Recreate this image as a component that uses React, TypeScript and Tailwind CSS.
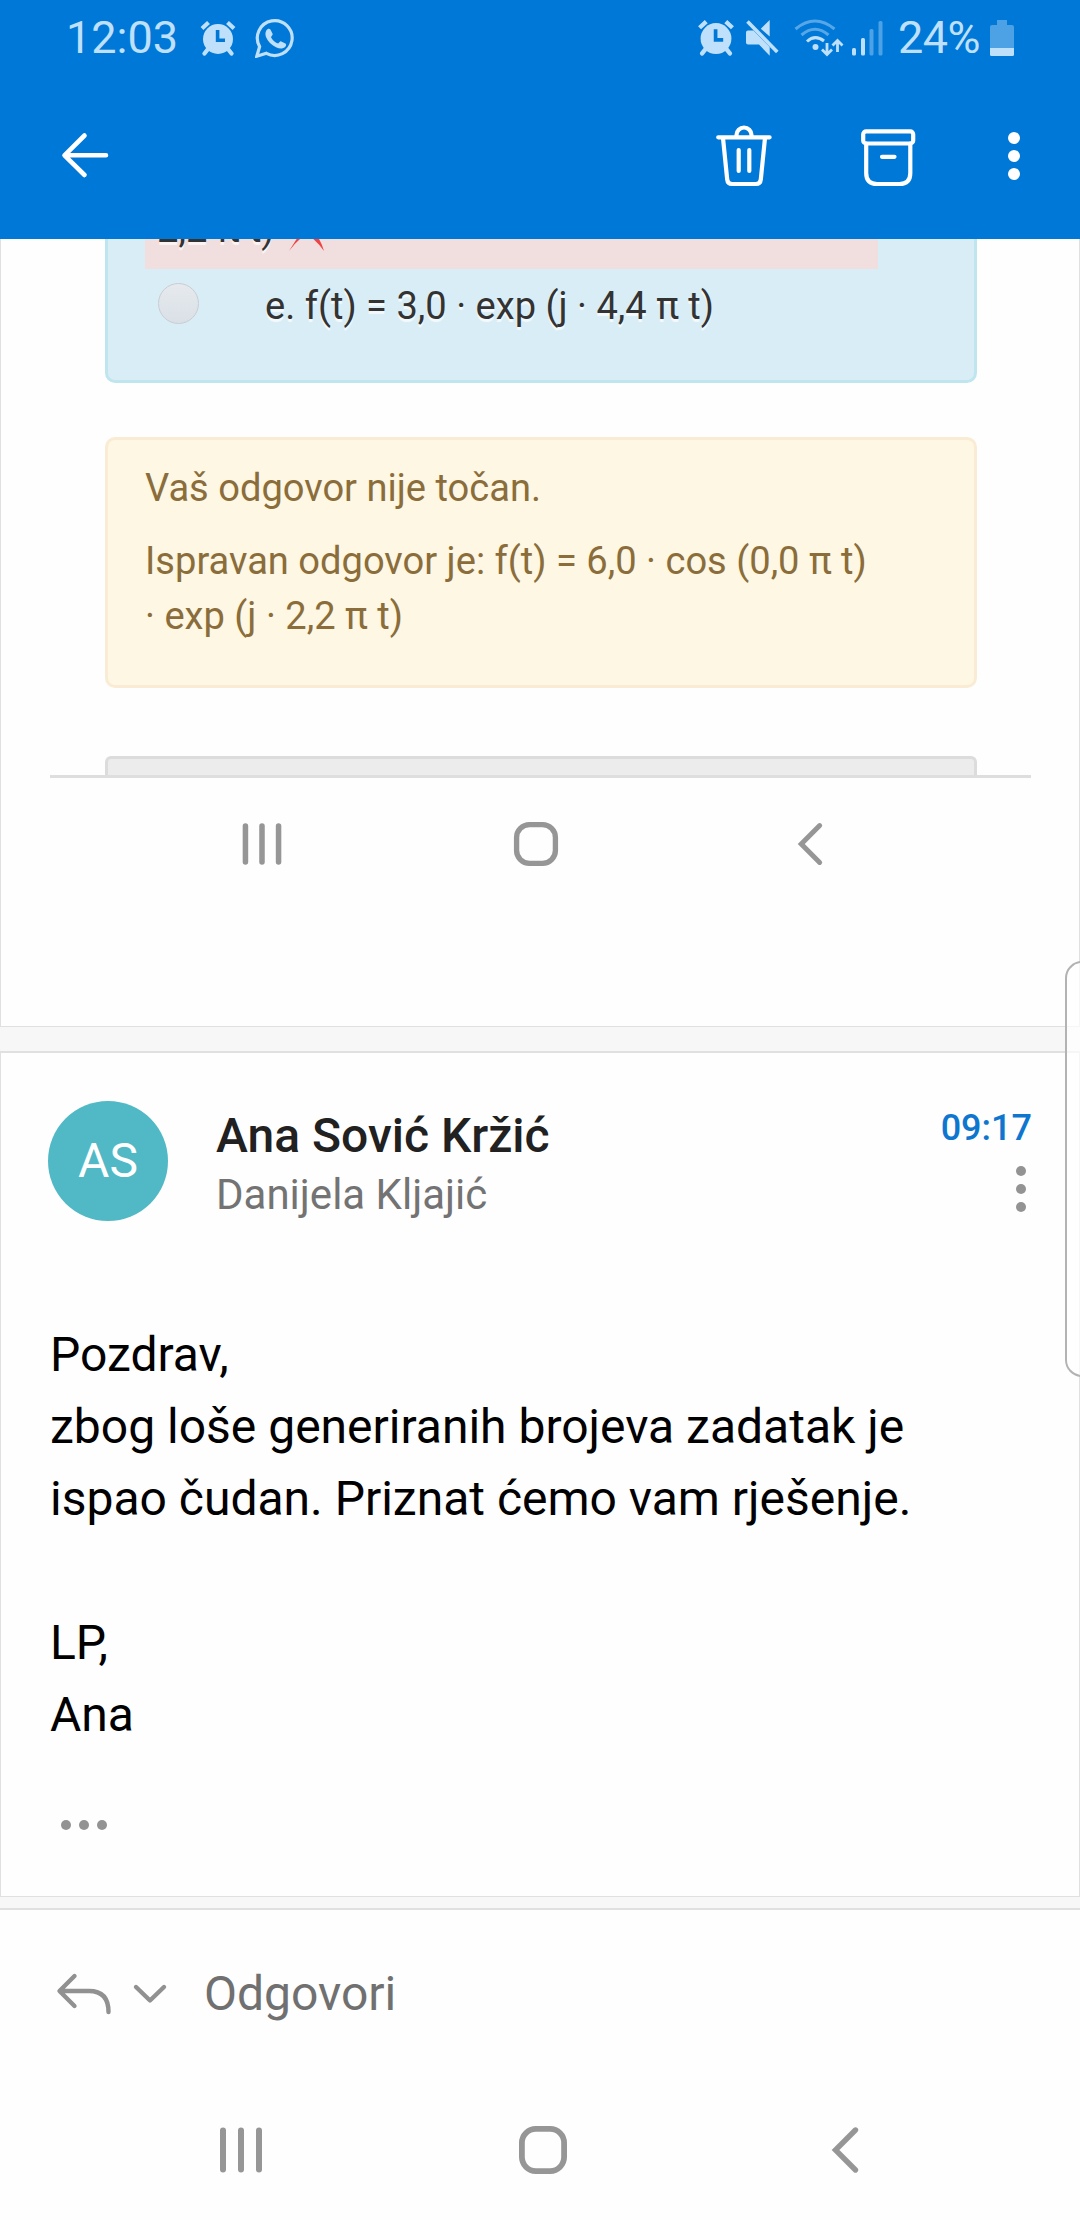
import React from "react";

function AlarmIcon({ className }: { className: string }) {
  return (
    <svg viewBox="0 0 36 36" className={className} fill="none">
      <circle cx="18" cy="19" r="15" fill="currentColor" />
      <path d="M2 8.5 8.5 2.5M34 8.5 27.5 2.5" stroke="currentColor" strokeWidth="4.2" />
      <path d="M8 29 4.5 33.5M28 29 31.5 33.5" stroke="currentColor" strokeWidth="4.2" strokeLinecap="round" />
      <path d="M17.6 10V20.3H25" stroke="#0078d7" strokeWidth="3.6" />
    </svg>
  );
}

function WhatsAppIcon() {
  return (
    <svg viewBox="0 0 40 40" className="h-10 w-10" fill="none">
      <path
        d="M1.8 38.2 4.6 28.6A17.4 17.4 0 1 1 11.4 35.3Z"
        stroke="currentColor"
        strokeWidth="3.2"
        strokeLinejoin="miter"
      />
      <path
        d="M11.2 12.8c1.200-2.200 3.300-2.500 4.200-1.200l2.200 4.200c.5 1.200-1.400 2.600-1.600 3.400 1.400 3 3.900 5.200 7 6.400 1-.5 2-2.600 3.200-2.200l4.200 2c1.200.7.800 2.400-.4 3.600-2.200 2-5.400 1.900-9 .2-4.700-2.200-8.100-5.700-9.900-9.900-.9-2.300-.9-4.600.1-6.500Z"
        fill="currentColor"
      />
    </svg>
  );
}

function MuteIcon() {
  return (
    <svg viewBox="0 0 34 38" className="h-[38px] w-[34px]">
      <path d="M24.700 1V17.600L15.800 9.700Z" fill="currentColor" />
      <path d="M1 13.500Q1 11.500 3 11.500H8.500L24.700 28V36.800L14 25.500H3Q1 25.500 1 23.500Z" fill="currentColor" />
      <path d="M2.500 2.500 32.300 33" stroke="currentColor" strokeWidth="3.600" />
    </svg>
  );
}

function WifiIcon() {
  return (
    <svg viewBox="0 0 50 38" className="h-[38px] w-[50px]" fill="none" stroke="currentColor">
      <path d="M1.500 10Q21 -6 40.500 10" strokeWidth="3" opacity=".45" />
      <path d="M7.500 16Q21 4.500 34.500 16" strokeWidth="3" opacity=".45" />
      <path d="M13 22.500Q21 15 30 22" strokeWidth="3" />
      <circle cx="21.500" cy="28" r="3" fill="currentColor" stroke="none" />
      <path d="M33 24V35M28 30.500 33 35.500 38 30.500" strokeWidth="2.800" />
      <path d="M43.500 33V22M38.500 26.500 43.500 21.500 48.500 26.500" strokeWidth="2.800" />
    </svg>
  );
}

function SignalIcon() {
  return (
    <svg viewBox="0 0 32 38" className="h-[38px] w-8" fill="currentColor">
      <rect x="1" y="29" width="4" height="7.500" rx="1.500" />
      <rect x="10" y="19" width="4" height="17.500" rx="1.500" />
      <rect x="18.500" y="10" width="4" height="26.500" rx="1.500" opacity=".4" />
      <rect x="27.500" y="2" width="4" height="34.500" rx="1.500" opacity=".4" />
    </svg>
  );
}

function BatteryIcon() {
  return (
    <svg viewBox="0 0 24 36" className="h-9 w-6" fill="currentColor">
      <path d="M7 0H17V5H22Q24 5 24 7V28H0V7Q0 5 2 5H7Z" opacity=".4" />
      <path d="M0 28H24V34.500Q24 36 22.500 36H1.500Q0 36 0 34.500Z" />
    </svg>
  );
}

function StatusBar() {
  return (
    <div className="flex h-[77px] items-center pl-[66px] pr-[66px] pb-0.5 text-[#bfe0fa]">
      <span className="w-[134px] pt-px text-[45px] leading-[76px]">12:03</span>
      <AlarmIcon className="h-9 w-9 shrink-0" />
      <div className="ml-[19px]">
        <WhatsAppIcon />
      </div>
      <div className="ml-auto flex items-center">
        <AlarmIcon className="h-[37px] w-[38px]" />
        <div className="ml-[10px]"><MuteIcon /></div>
        <div className="ml-[15px]"><WifiIcon /></div>
        <div className="ml-[7px]"><SignalIcon /></div>
        <span className="ml-[15px] w-[92px] whitespace-nowrap pt-px text-[45px] leading-[76px] tracking-[-0.5px]">24%</span>
        <BatteryIcon />
      </div>
    </div>
  );
}

function Toolbar() {
  return (
    <div className="flex h-[162px] items-center pb-1 pl-[60px] pr-[60px] text-white">
      <svg viewBox="0 0 50 62" className="h-[62px] w-[50px]" fill="none" stroke="currentColor" strokeWidth="4.600" strokeLinecap="round" strokeLinejoin="round">
        <path d="M24.500 10.500 4.500 30.300 24.500 50M5 30.300H46" />
      </svg>
      <div className="ml-auto flex items-center">
        <svg viewBox="0 0 56 62" className="h-[62px] w-14" fill="none" stroke="currentColor" strokeWidth="4.200" strokeLinecap="round" strokeLinejoin="round">
          <path d="M2.200 12.300H53.600M20.500 11.500V10a7.500 7.500 0 0 1 15 0v1.500M7 13 11.200 54.500Q11.700 59 16 59H40Q44.300 59 44.800 54.500L49 13" />
          <path d="M22.700 25V46M33.300 25V46" />
        </svg>
        <svg viewBox="0 0 56 62" className="ml-[88px] h-[62px] w-14" fill="none" stroke="currentColor" strokeWidth="4.200" strokeLinecap="round" strokeLinejoin="round">
          <rect x="3.200" y="6.300" width="50" height="12.200" rx="3" />
          <path d="M6.200 18.500V48Q6.200 59 17 59H39.500Q50.300 59 50.300 48V18.500M22 31.800H34.500" />
        </svg>
        <div className="ml-[92px] flex flex-col gap-1.5">
          <i className="size-3 rounded-full bg-white" />
          <i className="size-3 rounded-full bg-white" />
          <i className="size-3 rounded-full bg-white" />
        </div>
      </div>
    </div>
  );
}

function NavIcons({ size }: { size: "small" | "large" }) {
  const box = size === "large" ? "h-[50px] w-[50px]" : "h-[46px] w-[46px]";
  return (
    <>
      <svg viewBox="0 0 50 50" className={box} fill="none" stroke="#969696" strokeWidth="6" strokeLinecap="round">
        <path d="M7 5.500V44.500M25 5.500V44.500M43 5.500V44.500" />
      </svg>
      <svg viewBox="0 0 50 50" className={box} fill="none" stroke="#969696" strokeWidth="5.800">
        <rect x="3.900" y="3.900" width="42.200" height="42.200" rx="14" />
      </svg>
      <svg viewBox="0 0 50 50" className={box} fill="none" stroke="#969696" strokeWidth="5.400" strokeLinecap="round">
        <path d="M35.500 5 15.500 25 35.500 45" />
      </svg>
    </>
  );
}

function QuizMessage() {
  return (
    <section className="h-[788px] overflow-hidden border-x border-b border-[#e0e0e0] bg-[#fefefe] text-[38.1px] leading-[55px]">
      <div className="ml-[104px] h-[144px] w-[872px] rounded-b-[10px] border-x-[3px] border-b-[3px] border-[#bfe6ef] bg-[#d9edf6] pl-[37px] text-[#333] [text-shadow:0_3px_1px_rgba(255,255,255,0.7)]">
        <div className="flex h-[30px] w-[733px] items-end overflow-hidden bg-[#f1dede] pb-3 pl-3">
          <span>2,2 π t)</span>
          <svg viewBox="0 0 36 36" className="mb-[6px] ml-3.5 h-9 w-9 shrink-0" fill="#ef4444">
            <path d="M0 36 14 14 4 2 9 0 18 10 30 0 33 2 22 14Q31 22 35 36 28 26 18 19 8 25 0 36Z" />
          </svg>
        </div>
        <div className="flex pl-[13px] pt-2.5">
          <i className="mt-1 size-[41px] rounded-full border border-[#c9cdd0] bg-gradient-to-b from-[#e6eaee] to-[#dae0e7]" />
          <span className="ml-[66px] whitespace-nowrap">e. f(t) = 3,0 · exp (j · 4,4 π t)</span>
        </div>
      </div>

      <div className="ml-[104px] mt-[54px] h-[251px] w-[872px] rounded-[10px] border-[3px] border-[#faecd4] bg-[#fdf7e3] pl-[37px] pt-[21px] text-[#8a6d3b]">
        <p>Vaš odgovor nije točan.</p>
        <p className="mt-[18px] whitespace-nowrap">
          Ispravan odgovor je: f(t) = 6,0 · cos (0,0 π t)
          <br />· exp (j · 2,2 π t)
        </p>
      </div>

      <div className="ml-[49px] mt-[68px] w-[981px] border-b-[3px] border-[#dedede] pl-[55px]">
        <div className="h-[19px] w-[872px] rounded-t-[6px] border-x-[3px] border-t-[3px] border-[#dcdcdc] bg-[#ececec]" />
      </div>
      <div className="ml-[238px] mt-[43px] flex w-[594px] justify-between">
        <NavIcons size="small" />
      </div>
    </section>
  );
}

function ReplyMessage() {
  return (
    <section className="h-[846px] border border-t-2 border-[#e0e0e0] bg-[#fefefe]">
      <div className="flex pl-[47px] pr-[47px] pt-12">
        <div className="flex size-[120px] items-center justify-center rounded-full bg-[#50b9c5] text-[48px] text-white">AS</div>
        <div className="ml-12 pt-[7px]">
          <div className="text-[48px] font-medium leading-[55px] text-[#212121]">Ana Sović Kržić</div>
          <div className="mt-1 text-[42px] leading-[56px] text-[#737373]">Danijela Kljajić</div>
        </div>
        <div className="ml-auto flex flex-col items-end pt-[5px]">
          <span className="text-[36px] font-medium leading-[44px] text-[#0f76cf]">09:17</span>
          <div className="mr-1.5 mt-4 flex flex-col gap-2">
            <i className="size-2.5 rounded-full bg-[#939393]" />
            <i className="size-2.5 rounded-full bg-[#939393]" />
            <i className="size-2.5 rounded-full bg-[#939393]" />
          </div>
        </div>
      </div>
      <p className="ml-[49px] mt-24 whitespace-nowrap text-[48px] leading-[72px] text-black">
        Pozdrav,
        <br />
        zbog loše generiranih brojeva zadatak je
        <br />
        ispao čudan. Priznat ćemo vam rješenje.
        <br />
        <br />
        LP,
        <br />
        Ana
      </p>
      <div className="ml-[60px] mt-[69px] flex gap-2">
        <i className="size-2.5 rounded-full bg-[#939393]" />
        <i className="size-2.5 rounded-full bg-[#939393]" />
        <i className="size-2.5 rounded-full bg-[#939393]" />
      </div>
    </section>
  );
}

export default function App() {
  return (
    <div className="relative flex h-[2220px] w-[1080px] flex-col overflow-hidden bg-[#f7f7f7] font-['Roboto',sans-serif]">
      <header className="h-[239px] shrink-0 bg-[#0078d7]">
        <StatusBar />
        <Toolbar />
      </header>
      <QuizMessage />
      <div className="h-6 shrink-0" />
      <ReplyMessage />
      <footer className="mt-[11px] flex-1 border-t-2 border-[#e0e0e0] bg-[#fefefe]">
        <div className="flex h-[168px] items-center pl-[55px]">
          <svg viewBox="0 0 58 44" className="h-11 w-[58px]" fill="none" stroke="#919191" strokeWidth="4.400" strokeLinecap="round" strokeLinejoin="round">
            <path d="M19.500 4 4.500 19 19.500 34M5 19H34Q53.500 19 53.500 40" />
          </svg>
          <svg viewBox="0 0 36 22" className="ml-[19px] h-[22px] w-9" fill="none" stroke="#919191" strokeWidth="4.400" strokeLinecap="round" strokeLinejoin="round">
            <path d="M4 4 18 17.500 32 4" />
          </svg>
          <span className="ml-9 text-[48px] text-[#707070]">Odgovori</span>
        </div>
        <div className="ml-[216px] mt-[47px] flex w-[654px] justify-between">
          <NavIcons size="large" />
        </div>
      </footer>
      {/* Edge panel handle floating over the right side */}
      <div className="absolute right-[-4px] top-[961px] h-[416px] w-[19px] rounded-l-[17px] border-2 border-r-0 border-[#b3b3b3] bg-white/70" />
    </div>
  );
}
